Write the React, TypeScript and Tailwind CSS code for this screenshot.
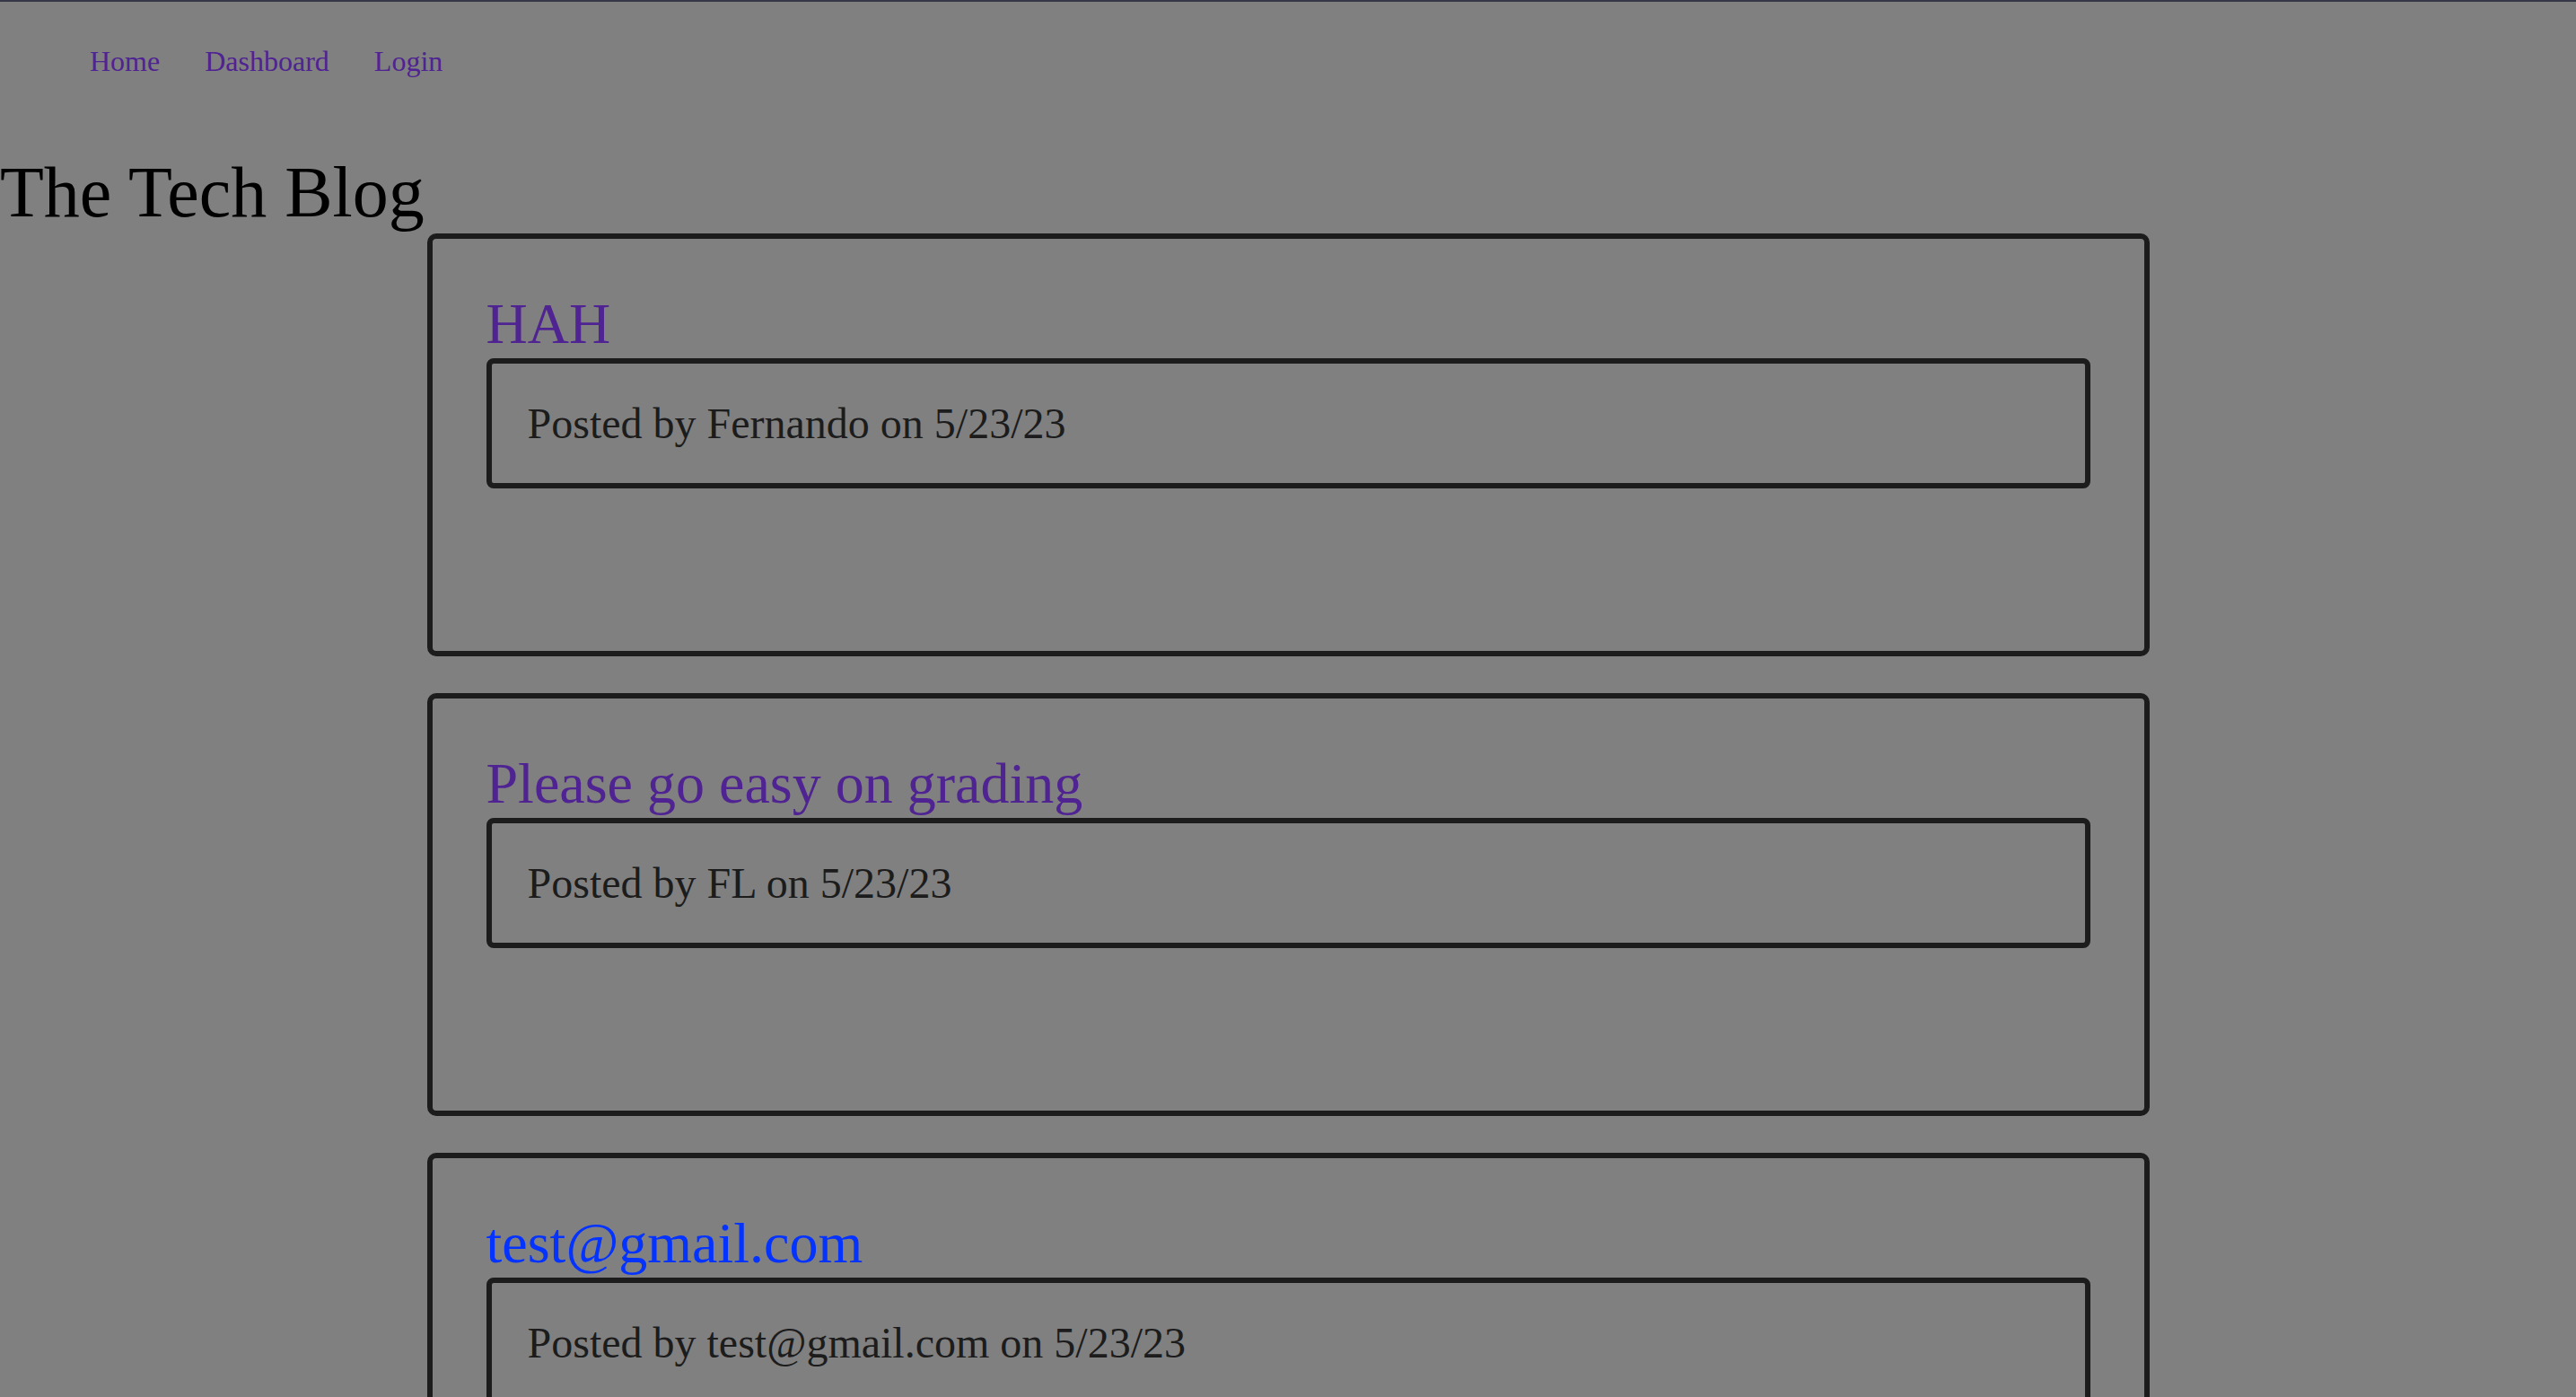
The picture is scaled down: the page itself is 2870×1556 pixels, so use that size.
const posts = [
  { title: 'HAH', author: 'Fernando', date: '5/23/23', color: 'text-[#4f2391]' },
  { title: 'Please go easy on grading', author: 'FL', date: '5/23/23', color: 'text-[#4f2391]' },
  { title: 'test@gmail.com', author: 'test@gmail.com', date: '5/23/23', color: 'text-[#0433ff]' },
];

export default function App() {
  return (
    <div className="min-h-screen bg-[#808080] font-['Liberation_Serif',serif] text-black overflow-hidden">
      <div className="h-[2px] bg-[#363848]" />

      {/* Top nav */}
      <nav className="flex gap-[50px] pl-[100px] pt-[48px] text-[32px] leading-[36px] text-[#4f2391]">
        <a href="#">Home</a>
        <a href="#">Dashboard</a>
        <a href="#">Login</a>
      </nav>

      <h1 className="mt-[84px] text-[80px] leading-[88px] font-normal">The Tech Blog</h1>

      {/* Post list */}
      <main className="mt-[2px] flex flex-col gap-[41px]">
        {posts.map((post, i) => (
          <section
            key={i}
            className="mx-auto w-[1919px] rounded-[10px] border-[6px] border-[#1c1c1c] px-[60px] pt-[59px] pb-[181px]"
          >
            <h2 className={`text-[64px] leading-[72px] mb-[2px] ${post.color}`}>
              <a href="#">{post.title}</a>
            </h2>
            <div className="rounded-[8px] border-[6px] border-[#1c1c1c] px-[40px] py-[40px] text-[48px] leading-[53px] text-[#1c1c1c]">
              Posted by {post.author} on {post.date}
            </div>
          </section>
        ))}
      </main>
    </div>
  );
}
